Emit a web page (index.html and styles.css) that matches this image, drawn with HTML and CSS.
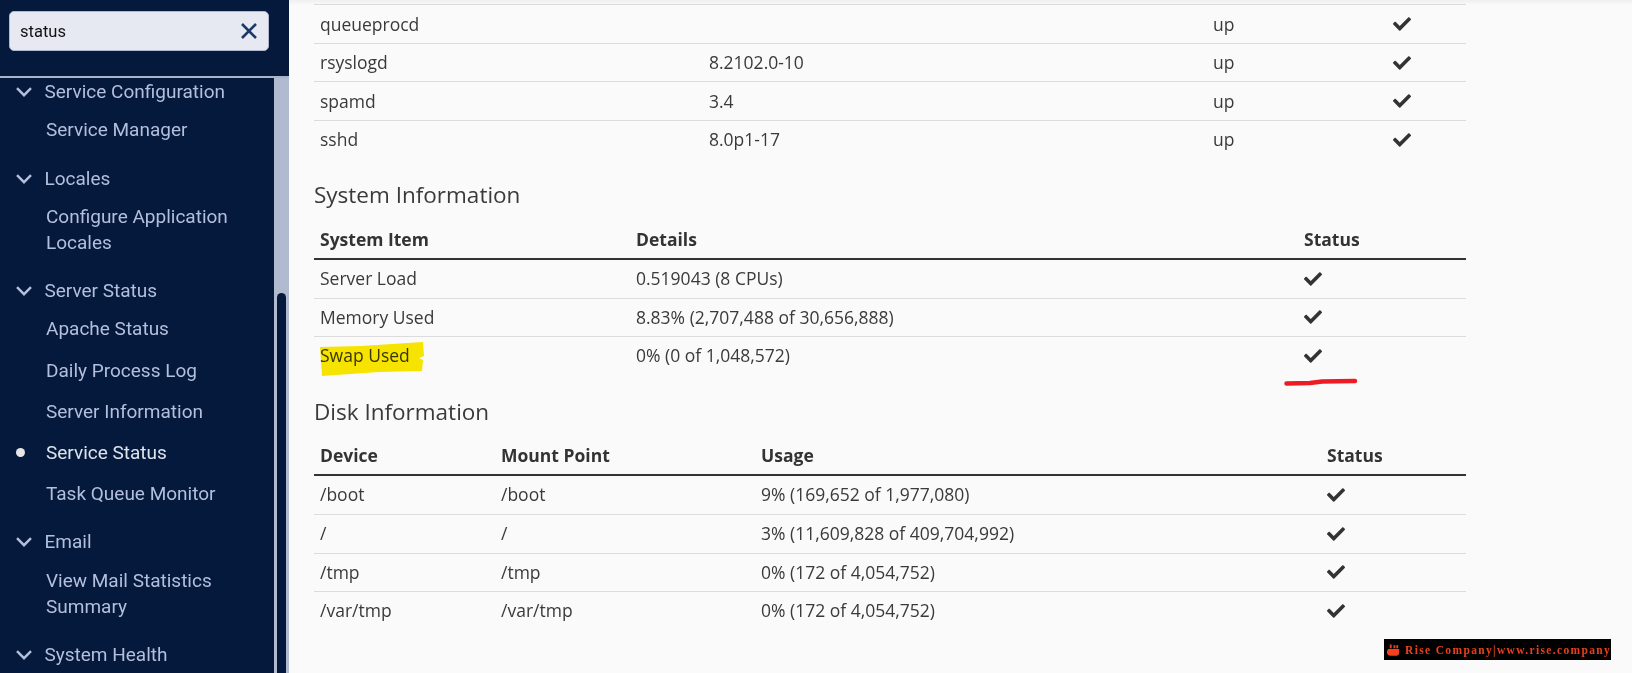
FILE: index.html
```html
<!DOCTYPE html>
<html lang="en">
<head>
<meta charset="utf-8">
<title>Service Status</title>
<link rel="stylesheet" href="styles.css">
</head>
<body>
<svg class="defs" width="0" height="0" aria-hidden="true">
  <symbol id="check" viewBox="0 0 512 512"><path fill="currentColor" d="M173.898 439.404l-166.4-166.4c-9.997-9.997-9.997-26.206 0-36.204l36.203-36.204c9.997-9.998 26.207-9.998 36.204 0L192 312.69 432.095 72.596c9.997-9.997 26.207-9.997 36.204 0l36.203 36.204c9.997 9.997 9.997 26.206 0 36.204l-294.4 294.401c-9.998 9.997-26.207 9.997-36.204-.001z"/></symbol>
  <symbol id="chev" viewBox="0 0 16 10"><path fill="none" stroke="currentColor" stroke-width="2.4" d="M1 1.2 8 8.2 15 1.2"/></symbol>
</svg>
<div class="app">
  <aside class="sidebar">
    <div class="search-wrap">
      <div class="search">
        <span class="search-text">status</span>
        <svg class="search-x" viewBox="0 0 16 16"><path fill="none" stroke="currentColor" stroke-width="2.6" d="M1 1 15 15M15 1 1 15"/></svg>
      </div>
    </div>
    <div class="nav-area">
      <nav class="nav">
        <div class="group">
          <div class="head"><svg class="chev"><use href="#chev"/></svg>Service Configuration</div>
          <a class="item">Service Manager</a>
        </div>
        <div class="group">
          <div class="head"><svg class="chev"><use href="#chev"/></svg>Locales</div>
          <a class="item">Configure Application Locales</a>
        </div>
        <div class="group">
          <div class="head"><svg class="chev"><use href="#chev"/></svg>Server Status</div>
          <a class="item">Apache Status</a>
          <a class="item">Daily Process Log</a>
          <a class="item">Server Information</a>
          <a class="item active">Service Status</a>
          <a class="item">Task Queue Monitor</a>
        </div>
        <div class="group">
          <div class="head"><svg class="chev"><use href="#chev"/></svg>Email</div>
          <a class="item">View Mail Statistics Summary</a>
        </div>
        <div class="group">
          <div class="head"><svg class="chev"><use href="#chev"/></svg>System Health</div>
        </div>
      </nav>
      <div class="scrolltrack"><div class="scrollthumb"></div></div>
    </div>
  </aside>
  <main class="main">
    <div class="topshade"></div>
    <table class="tbl tbl-services">
      <colgroup><col class="s1"><col class="s2"><col class="s3"><col class="s4"></colgroup>
      <tbody>
        <tr><td>queueprocd</td><td></td><td>up</td><td><svg class="check"><use href="#check"/></svg></td></tr>
        <tr><td>rsyslogd</td><td>8.2102.0-10</td><td>up</td><td><svg class="check"><use href="#check"/></svg></td></tr>
        <tr><td>spamd</td><td>3.4</td><td>up</td><td><svg class="check"><use href="#check"/></svg></td></tr>
        <tr><td>sshd</td><td>8.0p1-17</td><td>up</td><td><svg class="check"><use href="#check"/></svg></td></tr>
      </tbody>
    </table>
    <h2 class="title title-sys">System Information</h2>
    <table class="tbl">
      <colgroup><col class="y1"><col class="y2"><col class="y3"></colgroup>
      <thead><tr><th>System Item</th><th>Details</th><th>Status</th></tr></thead>
      <tbody>
        <tr><td>Server Load</td><td>0.519043 (8 CPUs)</td><td><svg class="check"><use href="#check"/></svg></td></tr>
        <tr><td>Memory Used</td><td>8.83% (2,707,488 of 30,656,888)</td><td><svg class="check"><use href="#check"/></svg></td></tr>
        <tr><td>Swap Used</td><td>0% (0 of 1,048,572)</td><td><svg class="check"><use href="#check"/></svg></td></tr>
      </tbody>
    </table>
    <h2 class="title title-disk">Disk Information</h2>
    <table class="tbl tbl-disk">
      <colgroup><col class="d1"><col class="d2"><col class="d3"><col class="d4"></colgroup>
      <thead><tr><th>Device</th><th>Mount Point</th><th>Usage</th><th>Status</th></tr></thead>
      <tbody>
        <tr><td>/boot</td><td>/boot</td><td>9% (169,652 of 1,977,080)</td><td><svg class="check"><use href="#check"/></svg></td></tr>
        <tr><td>/</td><td>/</td><td>3% (11,609,828 of 409,704,992)</td><td><svg class="check"><use href="#check"/></svg></td></tr>
        <tr><td>/tmp</td><td>/tmp</td><td>0% (172 of 4,054,752)</td><td><svg class="check"><use href="#check"/></svg></td></tr>
        <tr><td>/var/tmp</td><td>/var/tmp</td><td>0% (172 of 4,054,752)</td><td><svg class="check"><use href="#check"/></svg></td></tr>
      </tbody>
    </table>
  </main>
</div>
<svg class="marker-yellow" viewBox="0 0 106 34"><path fill="#fbe900" d="M1 5 L42 4 L104 0 L105 14 L100 16 L104 18 L103 29 L60 30 L3 34 Z"/></svg>
<svg class="marker-red" viewBox="0 0 74 8"><path fill="none" stroke="#ed1c24" stroke-width="4.5" stroke-linecap="round" d="M2.500 5.500 L26 5 L38 3.500 L71 3"/></svg>
<div class="watermark">
  <svg class="wm-icon" viewBox="0 0 16 14"><path fill="#f4411e" d="M2 6 L14 6 L14 10 Q14 13 11 13 L5 13 Q1 13 1 9 Z M4 1 H6 V5 H4 Z M8 2 H10 V5 H8 Z M11 2 H13 V5 H11 Z"/></svg>
  <span class="wm-text">Rise Company|www.rise.company</span>
</div>
</body>
</html>
```
FILE: styles.css
```css
* { box-sizing: border-box; }
html, body { margin: 0; height: 100%; overflow: hidden; }
body { font-family: "Open Sans", sans-serif; background: #fafafa; color: #3a3a3a; }
.defs { position: absolute; }
.app { display: flex; height: 673px; }

.sidebar { width: 289px; flex: none; display: flex; flex-direction: column; background: #05193d; }
.search-wrap { height: 76px; flex: none; padding: 11px 20px 0 9px; }
.search { height: 40px; display: flex; align-items: center; justify-content: space-between; padding: 0 11px 0 10px; background: #e6e9f2; border: 1px solid #aeb8ce; border-radius: 5px; }
.search-text { font-family: Roboto, sans-serif; font-size: 16.5px; color: #111; }
.search-x { width: 16px; height: 16px; color: #1d3769; }

.nav-area { flex: 1; min-height: 0; display: flex; border-top: 2px solid #a9b3ca; overflow: hidden; }
.nav { flex: 1; min-width: 0; font-family: Roboto, sans-serif; font-size: 19px; line-height: 26px; color: #b3bfdc; padding-top: 1px; }
.group { margin-bottom: 14.8px; }
.head { display: flex; align-items: center; height: 26px; padding-left: 16px; margin-bottom: 4.6px; }
.chev { width: 16px; height: 10px; margin-right: 12.5px; }
.item { display: block; position: relative; padding: 7.6px 40px 7.6px 46px; }
.item.active { color: #dfe3ec; }
.item.active::before { content: ""; position: absolute; left: 16px; top: 16px; width: 9px; height: 9px; border-radius: 50%; background: #e6e6e6; }
.scrolltrack { width: 15px; flex: none; background: #b1bbd0; padding: 215px 3px 0; }
.scrollthumb { height: 600px; background: #05193d; border-radius: 5px 5px 0 0; }

.main { flex: 1; min-width: 0; padding: 0 166px 0 25px; }
.topshade { height: 4px; margin: 0 -166px 0 -25px; background: linear-gradient(#f0f0f0, #f7f7f7); }
.tbl { width: 1152px; border-collapse: collapse; table-layout: fixed; font-size: 17.5px; line-height: 25.6px; }
.tbl td { padding: 6px 7px; border-top: 1px solid #dcdcdc; vertical-align: middle; }
.tbl-services td { padding: 6.5px 7px 5.5px; }
.tbl th { padding: 6px 7px 5px; text-align: left; font-weight: 700; font-size: 17.5px; border-bottom: 2px solid #333; color: #333; }
.tbl-disk th { padding-bottom: 6px; }
.tbl th:first-child, .tbl td:first-child { padding-left: 6px; }
.tbl thead + tbody tr:first-child td { border-top: 0; }
.check { display: block; width: 18px; height: 18px; color: #333; }
.title { margin: 0; font-size: 22.5px; font-weight: 400; line-height: 30px; color: #3a3a3a; }
.title-sys { margin-top: 22px; margin-bottom: 11px; }
.title-disk { margin-top: 22px; margin-bottom: 10px; }
.s1 { width: 388px; } .s2 { width: 504px; } .s3 { width: 180px; } .s4 { width: 80px; }
.y1 { width: 315px; } .y2 { width: 668px; } .y3 { width: 169px; }
.d1 { width: 180px; } .d2 { width: 260px; } .d3 { width: 566px; } .d4 { width: 146px; }

.marker-yellow { position: absolute; left: 319px; top: 342px; width: 106px; height: 34px; mix-blend-mode: multiply; }
.marker-red { position: absolute; left: 1284px; top: 378px; width: 74px; height: 8px; }
.watermark { position: absolute; left: 1384px; top: 639px; width: 227px; height: 21px; background: #000; display: flex; align-items: center; padding-left: 2px; gap: 4px; }
.wm-icon { width: 15px; height: 14px; flex: none; }
.wm-text { font-family: "Liberation Serif", serif; font-weight: 700; font-size: 11.5px; letter-spacing: 1.35px; color: #e8401c; white-space: nowrap; }
```
